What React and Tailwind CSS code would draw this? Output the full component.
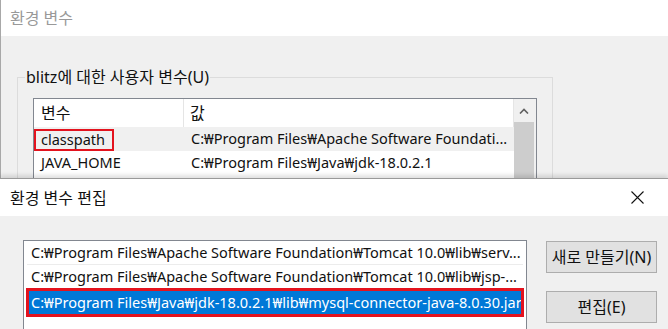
const FONT = "font-['Noto_Sans','Noto_Sans_CJK_KR',sans-serif]"

function ScrollUp() {
  return (
    <svg width="10" height="6" viewBox="0 0 10 6" className="block">
      <path d="M1 5.5 L5 1.5 L9 5.5" fill="none" stroke="#606060" strokeWidth="1.6" />
    </svg>
  )
}

function CloseIcon() {
  return (
    <svg width="13" height="13" viewBox="0 0 13 13" className="block">
      <path d="M0.5 0.5 L12.5 12.5 M12.5 0.5 L0.5 12.5" stroke="#111" strokeWidth="1.1" />
    </svg>
  )
}

function UserVars() {
  return (
    <div className="h-[178px] shrink-0 flex flex-col border-l border-[#a8a8a8] overflow-hidden">
      <div className="h-[36px] bg-white flex items-center pl-[9px] text-[16px] text-[#999] shrink-0">
        환경 변수
      </div>
      <div className="flex-1 bg-[#f0f0f0] pt-[31px] pl-[16px]">
        <fieldset className="w-[536px] h-[200px] border border-[#dcdcdc] pl-[15px] pr-[14px] m-0">
          <legend className="ml-[-8px] px-[1px] text-[16px] text-[#111] leading-[20px]">
            blitz에 대한 사용자 변수(U)
          </legend>
          <div className="mt-[11px] w-[504px] border border-[#828790] bg-white flex text-[14.5px] text-[#111]">
            <div className="flex-1 flex flex-col">
              <div className="h-[28px] flex border-r border-[#e5e5e5]">
                <div className="w-[150px] border-r border-[#e5e5e5] pl-[7px] flex items-center text-[16px]">변수</div>
                <div className="flex-1 pl-[6px] flex items-center text-[16px]">값</div>
              </div>
              <div className="h-[24px] flex bg-[#f0f0f0]">
                <div className="w-[150px] flex items-center pt-[1px]">
                  <span className="h-[22px] w-[80px] border-2 border-[#e3131e] flex items-center pl-[5px]">classpath</span>
                </div>
                <div className="flex-1 pl-[7px] flex items-center whitespace-nowrap overflow-hidden">
                  C:₩Program Files₩Apache Software Foundati...
                </div>
              </div>
              <div className="h-[24px] flex">
                <div className="w-[150px] pl-[7px] flex items-center">JAVA_HOME</div>
                <div className="flex-1 pl-[7px] flex items-center whitespace-nowrap">
                  C:₩Program Files₩Java₩jdk-18.0.2.1
                </div>
              </div>
            </div>
            <div className="w-[22px] bg-[#f0f0f0] flex flex-col pr-[2px]">
              <div className="h-[23px] flex items-center justify-center">
                <ScrollUp />
              </div>
              <div className="h-[60px] bg-[#cdcdcd]" />
            </div>
          </div>
        </fieldset>
      </div>
    </div>
  )
}

function EditDialog() {
  const rows = [
    'C:₩Program Files₩Apache Software Foundation₩Tomcat 10.0₩lib₩serv...',
    'C:₩Program Files₩Apache Software Foundation₩Tomcat 10.0₩lib₩jsp-...',
  ]
  return (
    <div className="flex-1 flex flex-col border-t border-[#9a9a9a] shadow-[0_-3px_4px_rgba(0,0,0,0.12)]">
      <div className="h-[37px] bg-white flex items-center justify-between pl-[10px] pr-[8px] text-[16px] text-[#111] shrink-0">
        <span>환경 변수 편집</span>
        <span className="w-[46px] flex justify-center">
          <CloseIcon />
        </span>
      </div>
      <div className="flex-1 bg-[#f0f0f0] flex pl-[23px] pt-[24px] gap-[19px]">
        <div className="w-[504px] h-[100px] border border-[#828790] bg-white text-[14.5px] text-[#111] px-[3px] flex flex-col">
          {rows.map((r) => (
            <div key={r} className="h-[24px] border-b border-[#ececec] pl-[4px] flex items-center whitespace-nowrap overflow-hidden">
              {r}
            </div>
          ))}
          <div className="h-[29px] border-[3px] border-[#e3131e] -mx-[1px] mt-[-1px]">
            <div className="h-full bg-[#0078d7] text-white pl-[2px] flex items-center whitespace-nowrap overflow-hidden">
              C:₩Program Files₩Java₩jdk-18.0.2.1₩lib₩mysql-connector-java-8.0.30.jar
            </div>
          </div>
        </div>
        <div className="flex flex-col gap-[18px] pt-[1px]">
          <button className="w-[111px] h-[32px] bg-[#e1e1e1] border border-[#adadad] text-[16px] text-[#111]">
            새로 만들기(N)
          </button>
          <button className="w-[111px] h-[32px] bg-[#e1e1e1] border border-[#adadad] text-[16px] text-[#111]">
            편집(E)
          </button>
        </div>
      </div>
    </div>
  )
}

export default function App() {
  return (
    <div className={`w-[668px] h-[329px] overflow-hidden bg-[#f0f0f0] flex flex-col ${FONT}`}>
      <UserVars />
      <EditDialog />
    </div>
  )
}
